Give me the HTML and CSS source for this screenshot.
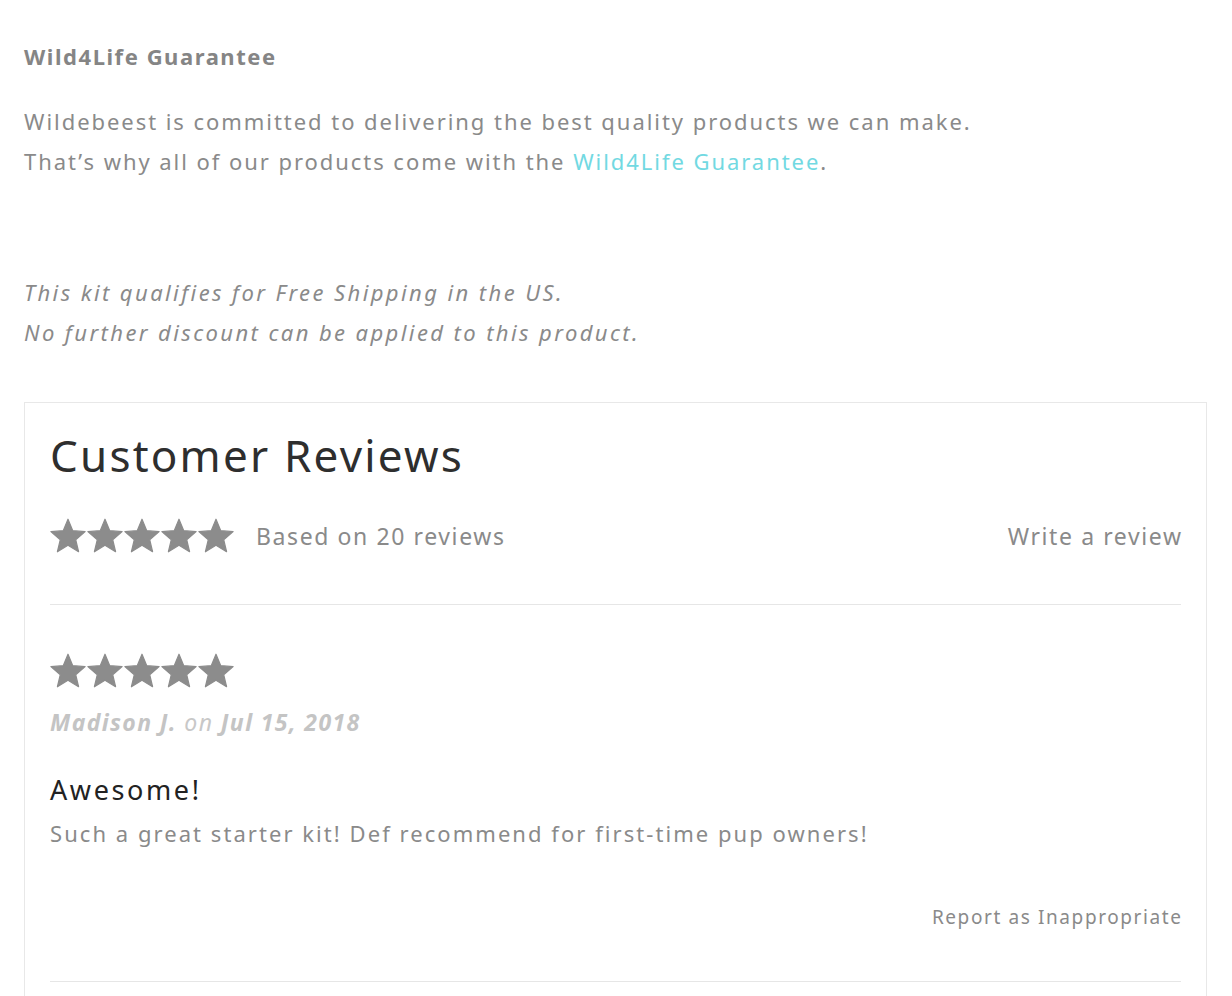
FILE: index.html
```html
<!DOCTYPE html>
<html>
<head>
<meta charset="utf-8">
<link rel="stylesheet" href="styles.css">
</head>
<body>
<div class="page">
  <h3 class="guarantee-title">Wild4Life Guarantee</h3>
  <p class="guarantee-text">Wildebeest is committed to delivering the best quality products we can make.<br>That’s why all of our products come with the <a class="link" href="#">Wild4Life Guarantee</a>.</p>
  <p class="note">This kit qualifies for Free Shipping in the US.<br>No further discount can be applied to this product.</p>

  <section class="reviews">
    <h2 class="reviews-title">Customer Reviews</h2>
    <div class="summary">
      <div class="summary-left">
        <span class="stars">
          <svg viewBox="0 0 24 24"><path d="M12 0.8L15.17 8.43L23.41 9.09L17.14 14.47L19.05 22.5L12 18.2L4.95 22.5L6.86 14.47L0.59 9.09L8.83 8.43Z"/></svg>
          <svg viewBox="0 0 24 24"><path d="M12 0.8L15.17 8.43L23.41 9.09L17.14 14.47L19.05 22.5L12 18.2L4.95 22.5L6.86 14.47L0.59 9.09L8.83 8.43Z"/></svg>
          <svg viewBox="0 0 24 24"><path d="M12 0.8L15.17 8.43L23.41 9.09L17.14 14.47L19.05 22.5L12 18.2L4.95 22.5L6.86 14.47L0.59 9.09L8.83 8.43Z"/></svg>
          <svg viewBox="0 0 24 24"><path d="M12 0.8L15.17 8.43L23.41 9.09L17.14 14.47L19.05 22.5L12 18.2L4.95 22.5L6.86 14.47L0.59 9.09L8.83 8.43Z"/></svg>
          <svg viewBox="0 0 24 24"><path d="M12 0.8L15.17 8.43L23.41 9.09L17.14 14.47L19.05 22.5L12 18.2L4.95 22.5L6.86 14.47L0.59 9.09L8.83 8.43Z"/></svg>
        </span>
        <span class="based">Based on 20 reviews</span>
      </div>
      <a class="write" href="#">Write a review</a>
    </div>

    <div class="review">
      <span class="stars">
        <svg viewBox="0 0 24 24"><path d="M12 0.8L15.17 8.43L23.41 9.09L17.14 14.47L19.05 22.5L12 18.2L4.95 22.5L6.86 14.47L0.59 9.09L8.83 8.43Z"/></svg>
        <svg viewBox="0 0 24 24"><path d="M12 0.8L15.17 8.43L23.41 9.09L17.14 14.47L19.05 22.5L12 18.2L4.95 22.5L6.86 14.47L0.59 9.09L8.83 8.43Z"/></svg>
        <svg viewBox="0 0 24 24"><path d="M12 0.8L15.17 8.43L23.41 9.09L17.14 14.47L19.05 22.5L12 18.2L4.95 22.5L6.86 14.47L0.59 9.09L8.83 8.43Z"/></svg>
        <svg viewBox="0 0 24 24"><path d="M12 0.8L15.17 8.43L23.41 9.09L17.14 14.47L19.05 22.5L12 18.2L4.95 22.5L6.86 14.47L0.59 9.09L8.83 8.43Z"/></svg>
        <svg viewBox="0 0 24 24"><path d="M12 0.8L15.17 8.43L23.41 9.09L17.14 14.47L19.05 22.5L12 18.2L4.95 22.5L6.86 14.47L0.59 9.09L8.83 8.43Z"/></svg>
      </span>
      <div class="meta"><strong>Madison J.</strong> on <strong>Jul 15, 2018</strong></div>
      <h3 class="review-title">Awesome!</h3>
      <p class="review-body">Such a great starter kit! Def recommend for first-time pup owners!</p>
      <div class="report-row"><a class="report" href="#">Report as Inappropriate</a></div>
    </div>
  </section>
</div>
</body>
</html>
```

FILE: styles.css
```css
html, body {
  margin: 0;
  padding: 0;
  background: #fff;
}
body {
  font-family: "Noto Sans", "Open Sans", sans-serif;
  color: #8a8a8a;
  overflow: hidden;
  height: 996px;
}
.page {
  padding: 40px 25px 0 24px;
}
.guarantee-title {
  margin: 0;
  font-size: 22px;
  line-height: 32px;
  font-weight: 700;
  letter-spacing: 1.55px;
  color: #858585;
}
.guarantee-text {
  margin: 29px 0 0;
  font-size: 22px;
  line-height: 40px;
  letter-spacing: 1.95px;
  color: #8a8a8a;
}
.link {
  color: #72d9e2;
  text-decoration: none;
}
.note {
  margin: 91px 0 0;
  font-size: 22px;
  line-height: 40px;
  font-style: italic;
  letter-spacing: 2.4px;
  color: #8a8a8a;
}
.reviews {
  margin-top: 50px;
  border: 1px solid #e8e8e8;
  border-bottom: none;
  padding: 22px 25px 0 25px;
  height: 700px;
}
.reviews-title {
  margin: 0;
  font-size: 44px;
  line-height: 60px;
  font-weight: 400;
  letter-spacing: 2.2px;
  color: #2e2e2e;
}
.summary {
  display: flex;
  align-items: center;
  justify-content: space-between;
  margin-top: 32px;
  padding-bottom: 49px;
  border-bottom: 1px solid #e6e6e6;
}
.summary-left {
  display: flex;
  align-items: center;
  gap: 22px;
}
.stars {
  display: flex;
  gap: 1px;
  height: 38px;
  align-items: center;
}
.stars svg {
  width: 36px;
  height: 36px;
  fill: #8c8c8c;
  stroke: #8c8c8c;
  stroke-width: 0.8;
  stroke-linejoin: round;
  display: block;
}
.based {
  font-size: 23px;
  letter-spacing: 1.6px;
  color: #8a8a8a;
}
.write {
  font-size: 23px;
  letter-spacing: 1.6px;
  margin-right: -1.6px;
  color: #8a8a8a;
  text-decoration: none;
}
.review {
  padding-top: 47px;
  padding-bottom: 51px;
  border-bottom: 1px solid #e6e6e6;
}
.meta {
  margin-top: 14px;
  font-size: 23px;
  line-height: 36px;
  font-style: italic;
  letter-spacing: 1.4px;
  color: #c8c8c8;
}
.meta strong {
  font-weight: 700;
  color: #c4c4c4;
}
.review-title {
  margin: 32px 0 0;
  font-size: 27px;
  line-height: 36px;
  font-weight: 400;
  letter-spacing: 2.6px;
  color: #222;
}
.review-body {
  margin: 7px 0 0;
  font-size: 22px;
  line-height: 36px;
  letter-spacing: 2.05px;
  color: #8a8a8a;
}
.report-row {
  display: flex;
  justify-content: flex-end;
  margin-top: 53px;
}
.report {
  font-size: 19px;
  letter-spacing: 1.6px;
  margin-right: -1.6px;
  color: #8a8a8a;
  text-decoration: none;
}
```
